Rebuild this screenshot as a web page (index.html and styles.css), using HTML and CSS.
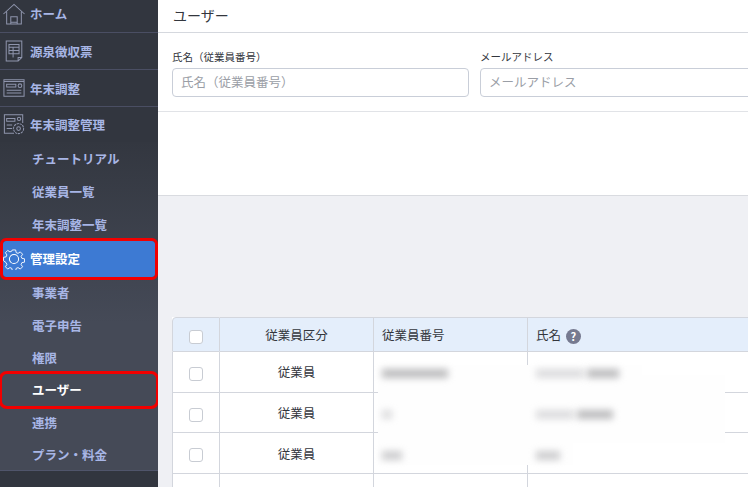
FILE: index.html
```html
<!DOCTYPE html>
<html lang="ja">
<head>
    <meta charset="UTF-8">
    <title>ユーザー</title>
    <link rel="stylesheet" href="styles.css">
</head>
<body>
    <div class="app">
        <nav class="sidebar">
            <a class="nav-top nav-home">
                <svg class="nav-icon" viewBox="0 0 24 24"><path d="M.5 12 12 1.500 23.500 12M4 9.500V23h16V9.500M8.500 23v-8h7v8M8.500 21h7"/></svg>
                <span>ホーム</span>
            </a>
            <a class="nav-top">
                <svg class="nav-icon" viewBox="0 0 24 24"><path d="M3.500 1h17v18l-4 4h-13zM6.500 5h11v3h-11zM6.500 8v7h11V8M6.500 11.500h11M11 8v11M20.500 19h-4v4"/></svg>
                <span>源泉徴収票</span>
            </a>
            <a class="nav-top">
                <svg class="nav-icon" viewBox="0 0 24 24"><path d="M1 3h22v18H1zM1 5h22M4 8h10v3H4zM4 14.500h16M4 17.500h16"/><circle cx="18.500" cy="9.500" r="2"/></svg>
                <span>年末調整</span>
            </a>
            <a class="nav-top nav-last">
                <svg class="nav-icon" viewBox="0 0 24 24"><path d="M12 22H1.500V2h20v9M4 6h9v3H4zM4 13h6M4 17h6"/><circle cx="17.500" cy="6.500" r="1.800"/><circle cx="17" cy="17" r="5.500" stroke-dasharray="2.500 .8"/><circle cx="17" cy="17" r="2"/></svg>
                <span>年末調整管理</span>
            </a>
            <div class="nav-group">
                <a class="nav-sub nav-sub-wide">チュートリアル</a>
                <a class="nav-sub nav-sub-wide">従業員一覧</a>
                <a class="nav-sub nav-sub-wide">年末調整一覧</a>
                <a class="nav-active">
                    <svg class="nav-icon nav-gear" viewBox="0 0 24 24"><path d="M10 1h4l.6 3.200 2.300 1 2.700-1.800 2.800 2.800-1.800 2.700 1 2.300 3.200.6v4l-3.200.6-1 2.300 1.800 2.700-2.800 2.800-2.700-1.800-2.300 1-.6 3.200h-4l-.6-3.200-2.300-1-2.700 1.800-2.800-2.800 1.800-2.700-1-2.300L-.800 14v-4l3.200-.6 1-2.300-1.800-2.700 2.800-2.800 2.700 1.800 2.300-1z" transform="translate(1.200 1.200) scale(.9)"/><circle cx="12" cy="12" r="5"/></svg>
                    <span>管理設定</span>
                </a>
                <a class="nav-sub">事業者</a>
                <a class="nav-sub">電子申告</a>
                <a class="nav-sub">権限</a>
                <a class="nav-sub nav-marked">ユーザー</a>
                <a class="nav-sub">連携</a>
                <a class="nav-sub">プラン・料金</a>
            </div>
        </nav>

        <main class="main">
            <header class="page-title">ユーザー</header>
            <section class="search">
                <div class="field">
                    <label class="field-label">氏名（従業員番号）</label>
                    <input class="field-input" placeholder="氏名（従業員番号）">
                </div>
                <div class="field">
                    <label class="field-label">メールアドレス</label>
                    <input class="field-input" placeholder="メールアドレス">
                </div>
            </section>
            <div class="search-foot"></div>

            <section class="content">
                <div class="table-wrap">
                    <div class="mask mask-a"></div>
                    <div class="mask mask-b"></div>
                    <div class="mask mask-c"></div>
                    <table class="users">
                        <thead>
                            <tr>
                                <th class="col-check"><span class="check"></span></th>
                                <th class="col-type center">従業員区分</th>
                                <th class="col-num">従業員番号</th>
                                <th>氏名 <span class="help">?</span></th>
                            </tr>
                        </thead>
                        <tbody>
                            <tr>
                                <td class="col-check"><span class="check"></span></td>
                                <td class="center">従業員</td>
                                <td><span class="blur w66"></span></td>
                                <td><span class="blur faint w48"></span><span class="blur w32"></span></td>
                            </tr>
                            <tr>
                                <td class="col-check"><span class="check"></span></td>
                                <td class="center">従業員</td>
                                <td><span class="blur faint w10"></span></td>
                                <td><span class="blur faint w38"></span><span class="blur w36"></span></td>
                            </tr>
                            <tr>
                                <td class="col-check"><span class="check"></span></td>
                                <td class="center">従業員</td>
                                <td><span class="blur mid w20"></span></td>
                                <td><span class="blur mid w24"></span></td>
                            </tr>
                            <tr class="row-empty">
                                <td class="col-check"></td>
                                <td></td>
                                <td></td>
                                <td></td>
                            </tr>
                        </tbody>
                    </table>
                </div>
            </section>
        </main>
    </div>
</body>
</html>
```

FILE: styles.css
```css
* {
    box-sizing: border-box;
}
html, body {
    margin: 0;
    height: 100%;
    overflow: hidden;
}
body {
    font-family: "Noto Sans CJK JP", "Noto Sans", sans-serif;
    font-size: 12.5px;
    color: #33363d;
    background-color: #eff0f4;
}
.app {
    display: flex;
    width: 100%;
    height: 487px;
    overflow: hidden;
}

/* sidebar */
.sidebar {
    flex: 0 0 158px;
    background-color: #32363f;
    color: #a8b6e6;
    font-weight: 700;
}
.nav-top {
    display: flex;
    align-items: center;
    gap: 5px;
    height: 37px;
    padding-left: 3px;
    border-bottom: 1px solid #4a4e63;
}
.nav-home {
    height: 33px;
    padding-bottom: 5px;
}
.nav-last {
    height: 34.500px;
    border-bottom: none;
}
.nav-icon {
    flex: none;
    width: 22px;
    height: 22px;
    fill: none;
    stroke: #8f95ad;
    stroke-width: 1.100;
}
.nav-group {
    height: 329.500px;
    background: linear-gradient(#333740, #454a57 55%);
    border-bottom: 1px solid #50556b;
}
.nav-sub {
    display: flex;
    align-items: center;
    height: 32.400px;
    padding-left: 32px;
}
.nav-sub-wide {
    height: 33px;
}
.nav-active {
    display: flex;
    align-items: center;
    gap: 5px;
    height: 36px;
    margin: 0 3px;
    color: #fff;
    background-color: #3d7ad3;
    border-radius: 3px;
    outline: 3px solid #f20000;
    position: relative;
}
.nav-active .nav-icon {
    stroke: #fff;
}
.nav-marked {
    color: #fff;
    margin: 0 2px;
    padding-left: 30px;
    border-radius: 5px;
    outline: 3px solid #f20000;
}

/* header and search */
.main {
    flex: 1;
    min-width: 0;
    display: flex;
    flex-direction: column;
    background-color: #fff;
    overflow: hidden;
}
.page-title {
    flex: none;
    height: 33px;
    padding: 6px 15px 0;
    font-size: 14px;
    line-height: 18px;
    border-bottom: 1px solid #d5d8de;
}
.search {
    flex: none;
    display: grid;
    grid-template-columns: 297px 297px;
    gap: 11px;
    height: 79px;
    padding: 15px 14px 0;
    border-bottom: 1px solid #e1e3e7;
}
.field-label {
    display: block;
    font-size: 10.500px;
    line-height: 17px;
    height: 20px;
}
.field-input {
    display: block;
    width: 100%;
    height: 29px;
    padding: 0 8px 2px;
    font: inherit;
    font-size: 12.500px;
    border: 1px solid #c9ced8;
    border-radius: 4px;
    outline: none;
}
.field-input::placeholder {
    color: #9a9ea6;
    opacity: 1;
}
.search-foot {
    flex: none;
    height: 84px;
    border-bottom: 1px solid #d9dbe0;
}

/* table */
.content {
    flex: none;
    padding: 121px 0 0 14px;
    background-color: #eff0f4;
}
.table-wrap {
    position: relative;
    width: 900px;
}
.users {
    width: 100%;
    table-layout: fixed;
    border-collapse: separate;
    border-spacing: 0;
    background-color: #fff;
}
.users th, .users td {
    padding: 0 8px;
    text-align: left;
    font-weight: 400;
    border-right: 1px solid #d3d6dd;
    border-bottom: 1px solid #d3d6dd;
}
.users th:first-child, .users td:first-child {
    border-left: 1px solid #d3d6dd;
}
.users th {
    height: 35px;
    background-color: #e4eefb;
    border-top: 1px solid #d3d6dd;
}
.users thead th:first-child {
    border-top-left-radius: 4px;
}
.users td {
    height: 40.700px;
}
.users .center {
    text-align: center;
}
.users .col-check {
    width: 48px;
    padding: 0;
    text-align: center;
}
.users .col-type, .users .col-num {
    width: 154px;
}
.check {
    display: inline-block;
    width: 14px;
    height: 14px;
    vertical-align: middle;
    border: 1px solid #c8ccd3;
    border-radius: 3px;
    background-color: #fff;
}
.help {
    display: inline-block;
    width: 15px;
    height: 15px;
    margin-left: 2px;
    border-radius: 50%;
    background-color: #767a90;
    color: #fff;
    font-size: 11px;
    font-weight: 700;
    line-height: 15px;
    text-align: center;
    vertical-align: -1px;
}

/* blurred personal data */
.mask {
    position: absolute;
    background-color: #fefefe;
}
.mask-a {
    left: 206px;
    top: 48px;
    width: 264px;
    height: 12px;
}
.mask-b {
    left: 206px;
    top: 58px;
    width: 347px;
    height: 68px;
}
.mask-c {
    left: 206px;
    top: 124px;
    width: 195px;
    height: 24px;
}
.blur {
    display: inline-block;
    position: relative;
    height: 9px;
    margin-right: 3px;
    vertical-align: middle;
    background-color: #bcbcbe;
    filter: blur(3.500px);
}
.blur.mid {
    background-color: #cdcdcf;
}
.blur.faint {
    background-color: #dcdcde;
}
.w10 { width: 10px; }
.w20 { width: 20px; }
.w24 { width: 24px; }
.w32 { width: 32px; }
.w36 { width: 36px; }
.w38 { width: 38px; }
.w48 { width: 48px; }
.w66 { width: 66px; }
```
